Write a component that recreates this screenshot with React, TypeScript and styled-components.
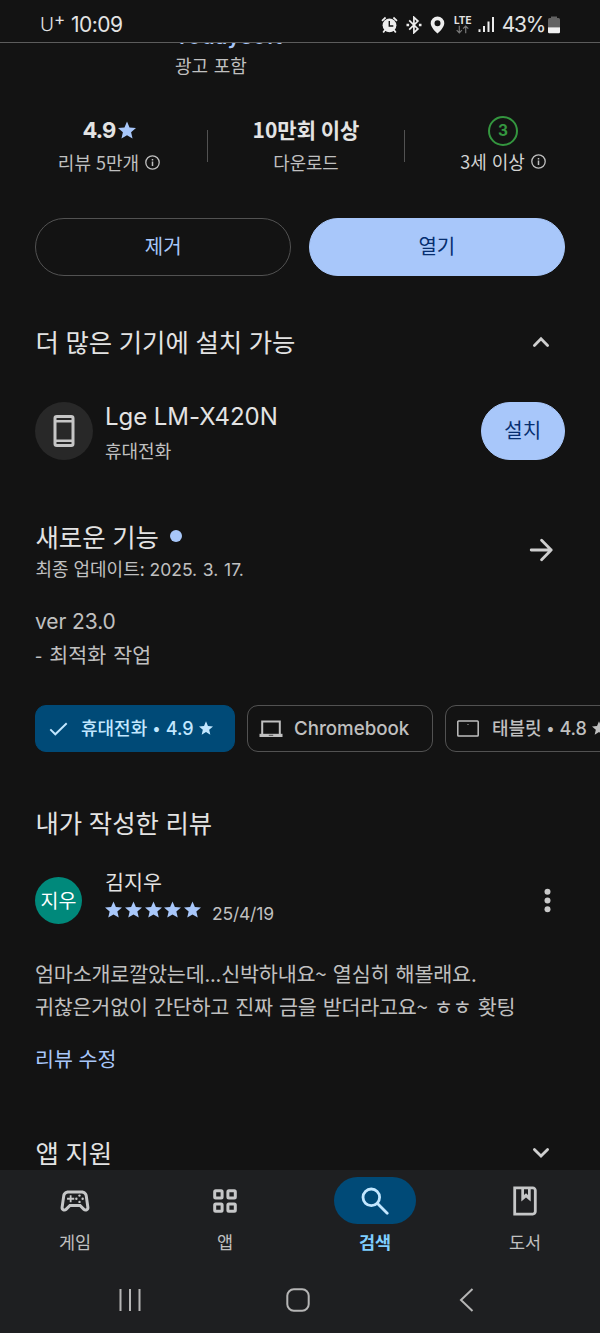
import React from "react";
import styled, { createGlobalStyle } from "styled-components";

const color = {
  bg: "#131313",
  nav: "#1e1f21",
  text: "#e3e3e3",
  sub: "#c0c0c0",
  line: "#525252",
  blue: "#a8c7fa",
  navy: "#062e6f",
  selected: "#004a77",
  onSelected: "#c2e7ff",
  green: "#34963f",
};

const GlobalStyle = createGlobalStyle`
  *, *::before, *::after { box-sizing: border-box; }
  body { margin: 0; background: ${color.bg}; }
  button { font: inherit; color: inherit; background: none; border: 0; padding: 0; margin: 0; }
  svg { display: block; flex: none; }
`;

const Screen = styled.div`
  width: 600px;
  height: 1333px;
  display: flex;
  flex-direction: column;
  overflow: hidden;
  background: ${color.bg};
  color: ${color.text};
  font-family: "Noto Sans CJK KR", sans-serif;
`;

const Text = styled.span<{
  $size: number;
  $line: number;
  $weight?: number;
  $color?: string;
  $track?: number;
  $word?: number;
  $latin?: boolean;
}>`
  display: block;
  flex: none;
  white-space: pre;
  font-family: ${(p) => (p.$latin ? `Inter, "Noto Sans CJK KR", sans-serif` : `"Noto Sans CJK KR", sans-serif`)};
  font-size: ${(p) => p.$size}px;
  line-height: ${(p) => p.$line}px;
  font-weight: ${(p) => p.$weight ?? 400};
  color: ${(p) => p.$color ?? color.text};
  letter-spacing: ${(p) => p.$track ?? 0}px;
  word-spacing: ${(p) => p.$word ?? (p.$latin ? 0 : 1)}px;
`;

const Heading = styled(Text).attrs({ $size: 25.4, $line: 38, $weight: 400, $word: 0.9 })`
  padding-top: 1px;
`;

const Latin = styled.span<{ $size?: number; $track?: number }>`
  font-family: Inter, sans-serif;
  font-size: ${(p) => (p.$size ? `${p.$size}px` : "inherit")};
  letter-spacing: ${(p) => p.$track ?? 0}px;
`;

/* Status bar */
const StatusBar = styled.header`
  flex: none;
  height: 43px;
  padding: 7px 40px 0 40px;
  display: flex;
  justify-content: space-between;
  align-items: center;
  border-bottom: 1px solid #5c5c5c;
`;
const Carrier = styled.div`
  display: flex;
  align-items: center;
`;
const CarrierMark = styled.div`
  display: flex;
  align-items: flex-start;
  width: 31px;
`;
const StatusIcons = styled.div`
  display: flex;
  align-items: center;
`;
const IconGroup = styled.div`
  display: flex;
  align-items: center;
  gap: 8px;
`;
const Battery = styled.div`
  display: flex;
  align-items: center;
  gap: 3px;
  margin-left: 7px;
`;
const Network = styled.div`
  width: 18px;
  margin: 0 6px 0 9px;
  display: flex;
  flex-direction: column;
  align-items: center;
`;

/* Scrolling content */
const Content = styled.main`
  flex: 1;
  min-height: 0;
  overflow: hidden;
  display: flex;
  flex-direction: column;
`;
const AppInfo = styled.section`
  flex: none;
  height: 70px;
  padding-left: 175px;
`;
const Developer = styled.div`
  height: 6px;
  display: flex;
  align-items: flex-end;
  margin-bottom: 3px;
`;
const Stats = styled.section`
  flex: none;
  height: 66px;
  margin-left: 11px;
  display: flex;
  align-items: center;
`;
const Stat = styled.div`
  flex: none;
  width: 196px;
  height: 66px;
  display: flex;
  flex-direction: column;
  align-items: center;
`;
const StatDivider = styled.div`
  flex: none;
  width: 1px;
  height: 32px;
  background: ${color.line};
`;
const StatTop = styled.div<{ $lift?: number }>`
  height: 35px;
  padding-bottom: ${(p) => p.$lift ?? 2}px;
  display: flex;
  align-items: center;
  gap: 2px;
`;
const StatLabel = styled.div<{ $lift?: number }>`
  height: 28px;
  padding-bottom: ${(p) => p.$lift ?? 0}px;
  display: flex;
  align-items: center;
  gap: 6px;
`;
const AgeBadge = styled.div`
  width: 30px;
  height: 30px;
  margin-top: 2px;
  border: 2px solid ${color.green};
  border-radius: 50%;
  display: flex;
  align-items: center;
  justify-content: center;
`;
const Actions = styled.section`
  flex: none;
  margin: 39px 35px 0;
  display: flex;
  gap: 17.4px;
`;
const Pill = styled.button<{ $filled?: boolean; $small?: boolean }>`
  flex: ${(p) => (p.$small ? "none" : "1 1 0")};
  width: ${(p) => (p.$small ? "84.5px" : "auto")};
  height: 58px;
  border-radius: 29px;
  border: 1px solid ${(p) => (p.$filled ? color.blue : color.line)};
  background: ${(p) => (p.$filled ? color.blue : "transparent")};
  display: flex;
  align-items: center;
  justify-content: center;
  padding-bottom: 2px;
`;
const SectionHead = styled.div<{ $top: number; $right?: number }>`
  flex: none;
  margin-top: ${(p) => p.$top}px;
  padding: 0 ${(p) => p.$right ?? 50}px 0 35.5px;
  display: flex;
  align-items: center;
  justify-content: space-between;
`;
const DeviceRow = styled.section`
  flex: none;
  margin: 42px 35px 0;
  height: 58px;
  display: flex;
  align-items: center;
`;
const DeviceIcon = styled.div`
  width: 58px;
  height: 58px;
  border-radius: 50%;
  background: #282828;
  display: flex;
  align-items: center;
  justify-content: center;
  margin-right: 12px;
`;
const Stack = styled.div<{ $top?: number }>`
  flex: 1;
  display: flex;
  flex-direction: column;
  padding-top: ${(p) => p.$top ?? 0}px;
`;
const TitleLine = styled.div`
  display: flex;
  align-items: center;
  gap: 11px;
`;
const NewDot = styled.span`
  width: 12px;
  height: 12px;
  margin-top: 1px;
  border-radius: 50%;
  background: ${color.blue};
`;
const Notes = styled.div<{ $top: number }>`
  flex: none;
  margin: ${(p) => p.$top}px 35px 0;
`;
const Chips = styled.div`
  flex: none;
  margin: 35px 0 0 35px;
  display: flex;
  gap: 12px;
`;
const Chip = styled.button<{ $on?: boolean; $width: number; $gap: number }>`
  flex: none;
  width: ${(p) => p.$width}px;
  height: 47px;
  padding: 0 0 0 ${(p) => (p.$on ? 13 : 11)}px;
  border-radius: 11px;
  border: 1px solid ${(p) => (p.$on ? color.selected : color.line)};
  background: ${(p) => (p.$on ? color.selected : "transparent")};
  display: flex;
  align-items: center;
  gap: ${(p) => p.$gap}px;
`;
const ChipLabel = styled.span<{ $lift?: number }>`
  display: flex;
  align-items: center;
  gap: 5px;
  padding-bottom: ${(p) => p.$lift ?? 1}px;
`;
const Reviewer = styled.section`
  flex: none;
  margin: 27px 49px 0 35px;
  height: 64px;
  display: flex;
  align-items: center;
`;
const Avatar = styled.div`
  width: 47px;
  height: 47px;
  border-radius: 50%;
  background: #00897b;
  display: flex;
  align-items: center;
  justify-content: center;
  margin: 0 23px 0 0;
`;
const ReviewMeta = styled(Stack)`
  height: 64px;
  justify-content: flex-start;
`;
const Rating = styled.div`
  display: flex;
  align-items: flex-start;
  gap: 2.8px;
  height: 26px;
  margin-top: 7px;
`;
const ReviewDate = styled.div`
  margin: 0 0 0 8px;
`;

/* Bottom navigation */
const BottomArea = styled.footer`
  flex: none;
  height: 163px;
  background: ${color.nav};
`;
const Tabs = styled.nav`
  display: flex;
  height: 97px;
  padding-top: 7px;
`;
const Tab = styled.button`
  flex: 1;
  display: flex;
  flex-direction: column;
  align-items: center;
  justify-content: flex-start;
`;
const TabIcon = styled.span<{ $on?: boolean }>`
  width: 82px;
  height: 47px;
  margin-bottom: 5px;
  border-radius: 24px;
  background: ${(p) => (p.$on ? color.selected : "transparent")};
  display: flex;
  align-items: center;
  justify-content: center;
`;
const SystemBar = styled.div`
  height: 66px;
  padding-left: 118px;
  display: grid;
  grid-template-columns: 168px 173px auto;
  align-items: center;
`;

const Star = ({ size, fill }: { size: number; fill: string }) => (
  <svg width={size} height={size} viewBox="2 2 20 19" fill={fill}>
    <path d="M12 17.27 18.18 21l-1.64-7.03L22 9.24l-7.19-.61L12 2 9.19 8.63 2 9.24l5.46 4.73L5.82 21z" />
  </svg>
);
const Info = () => (
  <svg width="15" height="15" viewBox="0 0 15 15" fill="none" stroke={color.sub}>
    <circle cx="7.5" cy="7.5" r="6.7" strokeWidth="1.3" />
    <path d="M7.5 6.6V11M7.5 4v1.5" strokeWidth="1.5" />
  </svg>
);
const ChevronSvg = styled.svg`
  margin-top: 3px;
`;
const Chevron = ({ down }: { down?: boolean }) => (
  <ChevronSvg width="18" height="12" viewBox="0 0 18 12" fill="none" stroke="#cfcfcf" strokeWidth="2.8" strokeLinecap="round">
    <path d={down ? "M2.4 2.4 9 9l6.6-6.6" : "M2.4 9.4 9 2.8l6.6 6.6"} />
  </ChevronSvg>
);

const AlarmIcon = () => (
  <svg width="17" height="18" viewBox="0 0 17 18">
    <path d="M1 4.8 4.6 1.5M16 4.8l-3.6-3.3M4 14l-1.8 2.6M13 14l1.8 2.6" stroke="#ededed" strokeWidth="1.7" />
    <circle cx="8.5" cy="9.3" r="6.9" fill="#ededed" />
    <path d="M8.3 5v5h4" fill="none" stroke={color.bg} strokeWidth="1.4" />
  </svg>
);
const BluetoothIcon = () => (
  <svg width="16" height="18" viewBox="0 0 16 18" fill="none" stroke="#ededed" strokeWidth="1.7">
    <path d="m3.2 4.4 8.700 8.500-4 3.800V1.300l4 3.800-8.700 8.500" />
    <path d="M.5 9h2.600M12.900 9h2.600" strokeWidth="2.4" />
  </svg>
);
const PinIcon = () => (
  <svg width="15" height="18" viewBox="0 0 15 18" fill="#ededed" fillRule="evenodd">
    <path d="M7.5.5A6.8 6.8 0 0 0 .7 7.3c0 4.6 6.8 10.3 6.8 10.3s6.8-5.7 6.8-10.3A6.8 6.8 0 0 0 7.5.5zm0 3.7a3 3 0 1 1 0 6 3 3 0 0 1 0-6z" />
  </svg>
);
const TrafficIcon = () => (
  <svg width="13" height="9" viewBox="0 0 13 9" fill="none" stroke="#777" strokeWidth="1.2">
    <path d="M3.3.8v7M.7 5.2l2.600 2.600 2.600-2.600M9.700 8.200v-7M7.100 3.600 9.700 1l2.600 2.600" />
  </svg>
);
const SignalIcon = () => (
  <svg width="17" height="17" viewBox="0 0 17 17" stroke="#ededed" strokeWidth="2">
    <path d="M1.500 13.200V16M6 10v6M10.500 5.500V16M15 1v15" />
  </svg>
);
const BatteryIcon = () => (
  <svg width="12" height="18" viewBox="0 0 12 18">
    <path d="M3 2V.5h6V2h1.500A1.500 1.500 0 0 1 12 3.500V11H0V3.500A1.500 1.500 0 0 1 1.500 2z" fill="#626262" />
    <path d="M0 11.300h12v4.700a1.200 1.200 0 0 1-1.200 1.200H1.200A1.200 1.200 0 0 1 0 16z" fill="#f0f0f0" />
  </svg>
);
const PhoneIcon = () => (
  <svg width="22" height="34" viewBox="0 0 22 34" fill="none" stroke="#c6c6c6" strokeWidth="3">
    <rect x="2" y="2.5" width="18" height="29" rx="1.8" />
    <path d="M2 7.200h18M2 26.800h18" strokeWidth="2.6" />
  </svg>
);
const ArrowIcon = () => (
  <svg width="24" height="24" viewBox="0 0 24 24" fill="none" stroke="#cfcfcf" strokeWidth="2.8" strokeLinecap="round" strokeLinejoin="round">
    <path d="M2.200 12h20M12.600 2.300 22.200 12l-9.600 9.700" />
  </svg>
);
const CheckIcon = () => (
  <svg width="19" height="14" viewBox="0 0 19 14" fill="none" stroke={color.onSelected} strokeWidth="1.9">
    <path d="m1.300 7.400 5 4.900L17.700 1.200" />
  </svg>
);
const LaptopIcon = () => (
  <svg width="24" height="18" viewBox="0 0 24 18">
    <path d="M3.200 14.500V1.500h17.600v13" fill="none" stroke={color.sub} strokeWidth="2" />
    <path d="M.5 13.800h23V17H.5z" fill={color.sub} />
    <path d="M9.800 14.800h4.400v1H9.800z" fill="#4a4a4a" />
  </svg>
);
const TabletIcon = () => (
  <svg width="22" height="17" viewBox="0 0 22 17" fill="none" stroke={color.sub} strokeWidth="1.5">
    <rect x=".8" y="1" width="20.4" height="15" rx=".8" />
    <circle cx="11" cy="4.5" r=".6" fill={color.sub} stroke="none" />
  </svg>
);
const MoreIcon = () => (
  <svg width="7" height="26" viewBox="0 0 7 26" fill="#c9c9c9">
    <circle cx="3.5" cy="4.7" r="3" />
    <circle cx="3.5" cy="13.5" r="3" />
    <circle cx="3.5" cy="22.3" r="3" />
  </svg>
);
const GamesIcon = () => (
  <svg width="36" height="36" viewBox="0 0 24 24" fill="#c6c7c8">
    <path d="M21.58 16.09l-1.09-7.66C20.21 6.46 18.52 5 16.53 5H7.47C5.48 5 3.79 6.46 3.51 8.43l-1.09 7.66C2.2 17.63 3.39 19 4.94 19c.68 0 1.32-.27 1.8-.75L9 16h6l2.25 2.25c.48.48 1.13.75 1.8.75 1.56 0 2.75-1.37 2.53-2.91zm-2.1.72c-.08.09-.21.19-.42.19-.15 0-.29-.06-.39-.16L15.83 14H8.17l-2.84 2.84c-.1.1-.24.16-.39.16-.21 0-.34-.1-.42-.19-.08-.09-.16-.23-.13-.44l1.09-7.66C5.63 7.74 6.48 7 7.47 7h9.06c.99 0 1.84.74 1.98 1.72l1.09 7.66c.03.2-.05.34-.12.43z" />
    <path d="M6.7 9.900h1.800V8.100h1.200v1.800h1.800v1.200H9.700v1.800H8.500v-1.800H6.700z" />
    <circle cx="12.9" cy="10.5" r=".8" />
    <circle cx="15" cy="8.4" r=".8" />
    <circle cx="15" cy="12.6" r=".8" />
    <circle cx="17.1" cy="10.5" r=".8" />
  </svg>
);
const AppsIcon = () => (
  <svg width="24" height="24" viewBox="0 0 24 24" fill="none" stroke="#c6c7c8" strokeWidth="3">
    {[1.7, 14.9].map((x) =>
      [1.7, 14.9].map((y) => <rect key={`${x}-${y}`} x={x} y={y} width="7.4" height="7.4" rx="1" />)
    )}
  </svg>
);
const SearchIcon = () => (
  <svg width="28" height="28" viewBox="0 0 28 28" fill="none" stroke={color.onSelected} strokeWidth="2.8" strokeLinecap="round">
    <circle cx="10.3" cy="10.3" r="8.3" />
    <path d="m16.500 16.500 9.700 9.700" />
  </svg>
);
const BooksIcon = () => (
  <svg width="24" height="30" viewBox="0 0 24 30" fill="none" stroke="#c6c7c8" strokeWidth="2.8">
    <path d="M1.700 1.900h18.100a2.500 2.500 0 0 1 2.500 2.500v21.200a2.500 2.500 0 0 1-2.500 2.500H1.700z" />
    <path d="M8.300 2v13.500l4.700-3.900 4.700 3.900V2z" fill="#c6c7c8" stroke="none" />
    <path d="M11 3.300h4v5.600l-2-1.600-2 1.600z" fill={color.nav} stroke="none" />
  </svg>
);

const tabs = [
  { label: "게임", icon: <GamesIcon /> },
  { label: "앱", icon: <AppsIcon /> },
  { label: "검색", icon: <SearchIcon />, on: true },
  { label: "도서", icon: <BooksIcon /> },
];

export default function App() {
  return (
    <Screen>
      <GlobalStyle />
      <StatusBar>
        <Carrier>
          <CarrierMark>
            <Text $latin $size={19} $line={28} $weight={300}>U</Text>
            <Text $latin $size={17} $line={16} $weight={400}>+</Text>
          </CarrierMark>
          <Text $latin $size={21} $line={26} $track={-0.5}>10:09</Text>
        </Carrier>
        <StatusIcons>
          <IconGroup>
            <AlarmIcon />
            <BluetoothIcon />
            <PinIcon />
          </IconGroup>
          <Network>
            <Text $latin $size={10} $line={9} $weight={700}>LTE</Text>
            <TrafficIcon />
          </Network>
          <SignalIcon />
          <Battery>
            <Text $latin $size={21} $line={26} $track={-1.3}>43%</Text>
            <BatteryIcon />
          </Battery>
        </StatusIcons>
      </StatusBar>

      <Content>
        <AppInfo>
          <Developer>
            <Text $latin $size={21} $line={24} $weight={600} $color={color.blue} $track={0.7}>Todaysoft</Text>
          </Developer>
          <Text $size={18} $line={26} $color={color.sub} $word={1.5}>광고 포함</Text>
        </AppInfo>

        <Stats>
          <Stat>
            <StatTop>
              <Text $latin $size={22} $line={28} $weight={700} $track={-0.8}>4.9</Text>
              <Star size={18} fill={color.blue} />
            </StatTop>
            <StatLabel>
              <Text $size={18} $line={26} $color={color.sub}>리뷰 5만개</Text>
              <Info />
            </StatLabel>
          </Stat>
          <StatDivider />
          <Stat>
            <StatTop $lift={4}>
              <Text $size={21} $line={28} $weight={700} $word={0}>10만회 이상</Text>
            </StatTop>
            <StatLabel $lift={1}>
              <Text $size={17.8} $line={26} $color={color.sub}>다운로드</Text>
            </StatLabel>
          </Stat>
          <StatDivider />
          <Stat>
            <StatTop>
              <AgeBadge>
                <Text $latin $size={15.5} $line={20} $weight={700} $color={color.green}>3</Text>
              </AgeBadge>
            </StatTop>
            <StatLabel $lift={2}>
              <Text $size={18} $line={26} $color="#d2d2d2">3세 이상</Text>
              <Info />
            </StatLabel>
          </Stat>
        </Stats>

        <Actions>
          <Pill>
            <Text $size={20} $line={28} $color={color.blue}>제거</Text>
          </Pill>
          <Pill $filled>
            <Text $size={20} $line={28} $color={color.navy}>열기</Text>
          </Pill>
        </Actions>

        <SectionHead $top={45}>
          <Heading>더 많은 기기에 설치 가능</Heading>
          <Chevron />
        </SectionHead>

        <DeviceRow>
          <DeviceIcon>
            <PhoneIcon />
          </DeviceIcon>
          <Stack $top={3}>
            <Text $latin $size={24} $line={34} $track={-0.05}>Lge LM-X420N</Text>
            <Text $size={18} $line={32} $color={color.sub}>휴대전화</Text>
          </Stack>
          <Pill $filled $small>
            <Text $size={20} $line={28} $color={color.navy}>설치</Text>
          </Pill>
        </DeviceRow>

        <SectionHead $top={56} $right={47}>
          <div>
            <TitleLine>
              <Heading>새로운 기능</Heading>
              <NewDot />
            </TitleLine>
            <Text $size={18} $line={26} $color={color.sub} $word={0.8}>
              최종 업데이트: <Latin $size={17.5}>2025. 3. 17.</Latin>
            </Text>
          </div>
          <ArrowIcon />
        </SectionHead>

        <Notes $top={23}>
          <Text $latin $size={21} $line={32} $color={color.sub} $track={-0.1}>ver 23.0</Text>
          <Text $size={20.6} $line={32} $color={color.sub} $word={2.5}>- 최적화 작업</Text>
        </Notes>

        <Chips>
          <Chip $on $width={200} $gap={13}>
            <CheckIcon />
            <ChipLabel>
              <Text $size={18} $line={26} $weight={500} $color={color.onSelected} $word={2}>
                휴대전화 • <Latin>4.9</Latin>
              </Text>
              <Star size={14} fill={color.onSelected} />
            </ChipLabel>
          </Chip>
          <Chip $width={186} $gap={11}>
            <LaptopIcon />
            <ChipLabel $lift={0}>
              <Text $latin $size={18.7} $line={26} $weight={500} $color={color.sub}>Chromebook</Text>
            </ChipLabel>
          </Chip>
          <Chip $width={200} $gap={13}>
            <TabletIcon />
            <ChipLabel>
              <Text $size={18} $line={26} $weight={500} $color={color.sub} $word={1.6}>
                태블릿 • <Latin>4.8</Latin>
              </Text>
              <Star size={14} fill={color.sub} />
            </ChipLabel>
          </Chip>
        </Chips>

        <SectionHead $top={50}>
          <Heading>내가 작성한 리뷰</Heading>
        </SectionHead>

        <Reviewer>
          <Avatar>
            <Text $size={19.5} $line={24} $color="#fff">지우</Text>
          </Avatar>
          <ReviewMeta>
            <Text $size={20.6} $line={26}>김지우</Text>
            <Rating>
              {[0, 1, 2, 3, 4].map((i) => (
                <Star key={i} size={17} fill={color.blue} />
              ))}
              <ReviewDate>
                <Text $latin $size={17.5} $line={26} $color={color.sub} $track={-0.2}>25/4/19</Text>
              </ReviewDate>
            </Rating>
          </ReviewMeta>
          <MoreIcon />
        </Reviewer>

        <Notes $top={25}>
          <Text $size={20.7} $line={33} $color={color.sub} $track={-0.2} $word={1.8}>엄마소개로깔았는데...신박하내요~ 열심히 해볼래요.</Text>
          <Text $size={20.7} $line={33} $color={color.sub} $track={-0.25} $word={1.8}>귀찮은거없이 간단하고 진짜 금을 받더라고요~ ㅎㅎ 홧팅</Text>
        </Notes>
        <Notes $top={20}>
          <Text $size={20.6} $line={30} $color={color.blue}>리뷰 수정</Text>
        </Notes>

        <SectionHead $top={59}>
          <Heading>앱 지원</Heading>
          <Chevron down />
        </SectionHead>
      </Content>

      <BottomArea>
        <Tabs>
          {tabs.map((t) => (
            <Tab key={t.label}>
              <TabIcon $on={t.on}>{t.icon}</TabIcon>
              <Text $size={17.5} $line={26} $weight={t.on ? 700 : 400} $color={t.on ? "#7fcfff" : color.sub}>
                {t.label}
              </Text>
            </Tab>
          ))}
        </Tabs>
        <SystemBar>
          <svg width="24" height="24" viewBox="0 0 24 24" stroke="#b5b5b5" strokeWidth="2">
            <path d="M2.5 1v22M12 1v22M21.5 1v22" />
          </svg>
          <svg width="24" height="24" viewBox="0 0 24 24" fill="none" stroke="#b5b5b5" strokeWidth="2">
            <rect x="1.3" y="1.3" width="21.4" height="21.4" rx="6.5" />
          </svg>
          <svg width="15" height="24" viewBox="0 0 15 24" fill="none" stroke="#b5b5b5" strokeWidth="2">
            <path d="M13.5 1 2 12l11.500 11" />
          </svg>
        </SystemBar>
      </BottomArea>
    </Screen>
  );
}
